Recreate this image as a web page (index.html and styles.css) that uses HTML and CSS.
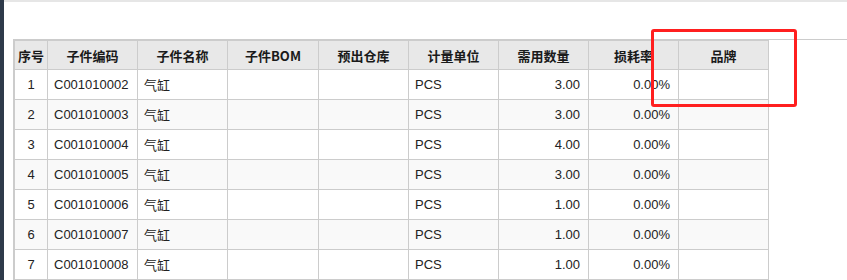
FILE: index.html
```html
<!DOCTYPE html>
<html lang="zh-CN">
<head>
<meta charset="utf-8">
<title>子件列表</title>
<link rel="stylesheet" href="styles.css">
</head>
<body>
<div class="app">
  <div class="sidebar-edge"></div>
  <div class="main">
    <div class="topbar"></div>
    <div class="content">
      <div class="grid-wrap">
        <table class="grid">
          <colgroup>
            <col class="c-idx"><col class="c"><col class="c"><col class="c-wide"><col class="c"><col class="c"><col class="c"><col class="c"><col class="c">
          </colgroup>
          <thead>
            <tr>
              <th>序号</th><th>子件编码</th><th>子件名称</th><th>子件BOM</th><th>预出仓库</th><th>计量单位</th><th>需用数量</th><th>损耗率</th><th>品牌</th>
            </tr>
          </thead>
          <tbody>
            <tr><td class="ctr">1</td><td>C001010002</td><td>气缸</td><td></td><td></td><td>PCS</td><td class="num">3.00</td><td class="num">0.00%</td><td></td></tr>
            <tr><td class="ctr">2</td><td>C001010003</td><td>气缸</td><td></td><td></td><td>PCS</td><td class="num">3.00</td><td class="num">0.00%</td><td></td></tr>
            <tr><td class="ctr">3</td><td>C001010004</td><td>气缸</td><td></td><td></td><td>PCS</td><td class="num">4.00</td><td class="num">0.00%</td><td></td></tr>
            <tr><td class="ctr">4</td><td>C001010005</td><td>气缸</td><td></td><td></td><td>PCS</td><td class="num">3.00</td><td class="num">0.00%</td><td></td></tr>
            <tr><td class="ctr">5</td><td>C001010006</td><td>气缸</td><td></td><td></td><td>PCS</td><td class="num">1.00</td><td class="num">0.00%</td><td></td></tr>
            <tr><td class="ctr">6</td><td>C001010007</td><td>气缸</td><td></td><td></td><td>PCS</td><td class="num">1.00</td><td class="num">0.00%</td><td></td></tr>
            <tr><td class="ctr">7</td><td>C001010008</td><td>气缸</td><td></td><td></td><td>PCS</td><td class="num">1.00</td><td class="num">0.00%</td><td></td></tr>
          </tbody>
        </table>
      </div>
    </div>
  </div>
  <div class="highlight"></div>
</div>
</body>
</html>
```

FILE: styles.css
```css
* { box-sizing: border-box; }
html, body { margin: 0; padding: 0; background: #fff; }
body {
  font-family: "Liberation Sans", "Noto Sans CJK SC", Arial, sans-serif;
  font-size: 13px;
  color: #222;
  overflow: hidden;
}
.app {
  position: relative;
  display: flex;
  height: 280px;
}
.sidebar-edge {
  width: 4px;
  flex: 0 0 4px;
  background: #2e3a4a;
}
.main {
  flex: 1;
  display: flex;
  flex-direction: column;
}
.topbar {
  height: 3px;
  background: #e6e6e6;
}
.content {
  padding: 37px 0 0 9px;
}
.grid-wrap {
  border-top: 1px solid #cccccc;
  border-left: 1px solid #cccccc;
}
.grid {
  border-collapse: separate;
  border-spacing: 0;
  table-layout: fixed;
  width: 755px;
  border-top: 1px solid #cccccc;
  border-left: 1px solid #cccccc;
}
.c-idx { width: 33px; }
.c { width: 90px; }
.c-wide { width: 91px; }
.grid th, .grid td {
  border-right: 1px solid #cccccc;
  border-bottom: 1px solid #cccccc;
  padding: 0 8px 0 6px;
  white-space: nowrap;
  overflow: hidden;
}
.grid th {
  height: 29px;
  background: #e8e8e8;
  font-family: "Noto Sans CJK SC", "Liberation Sans", sans-serif;
  font-weight: bold;
  font-size: 13px;
  color: #1a1a1a;
  text-align: center;
  padding: 0 2px;
}
.grid td {
  height: 30px;
  color: #222;
  text-align: left;
}
.grid tbody tr:nth-child(even) td { background: #f9f9f9; }
.grid td.ctr { text-align: center; padding: 0 2px; }
.grid td.num { text-align: right; }
.highlight {
  position: absolute;
  left: 651px;
  top: 29px;
  width: 146px;
  height: 78px;
  border: 3px solid #ff1f1f;
  border-radius: 3px;
}
```
